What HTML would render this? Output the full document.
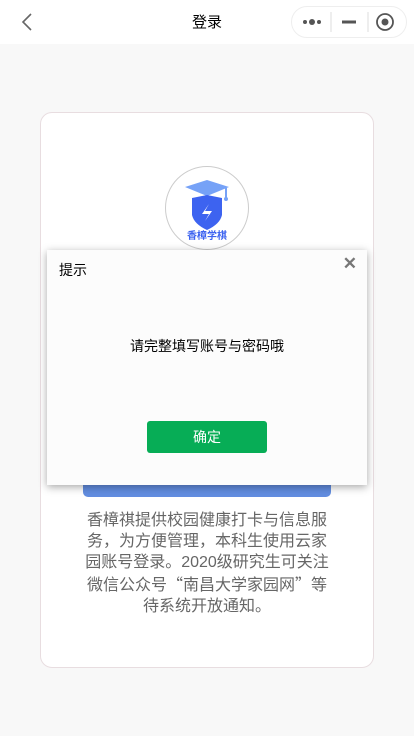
<!DOCTYPE html>
<html><head><meta charset="utf-8"><style>
*{margin:0;padding:0;box-sizing:border-box}
body{width:414px;height:736px;background:#f8f8f8;font-family:"Liberation Sans","Noto Sans CJK SC",sans-serif;position:relative;overflow:hidden}
.nav{position:absolute;left:0;top:0;width:414px;height:44px;background:#fff}
.title{position:absolute;left:0;width:414px;top:11px;text-align:center;font-size:15px;color:#000}
.cap{position:absolute;left:291px;top:6px;width:116px;height:32px;border:1px solid #eee;border-radius:16px;background:#fff}
.card{position:absolute;left:40px;top:112px;width:334px;height:556px;background:#fff;border:1px solid #e8dde0;border-radius:12px}
.logo{position:absolute;left:165px;top:166px;width:84px;height:84px;border:1px solid #ccc;border-radius:50%;background:#fff}
.btnblue{position:absolute;left:83px;top:470px;width:248px;height:27px;background:#628de0;border-radius:0 0 5px 5px}
.txt{position:absolute;left:84px;top:510px;width:246px;font-size:16px;line-height:21px;color:#666;text-align:center}
.q{font-family:"Noto Sans CJK SC",sans-serif}
.dlg{position:absolute;left:47px;top:250px;width:320px;height:235px;background:#fcfcfc;box-shadow:0 2px 8px rgba(0,0,0,.35)}
.dt{position:absolute;left:12px;top:10px;font-size:14px;color:#000}
.dx{position:absolute;right:10px;top:4px;font-size:17px;color:#777;font-weight:bold}
.dm{position:absolute;left:0;width:320px;top:86px;text-align:center;font-size:14px;color:#000}
.ok{position:absolute;left:100px;top:171px;width:120px;height:32px;background:#07ad56;border-radius:3px;color:#fff;font-size:14px;text-align:center;line-height:32px}
</style></head><body>
<div class="nav">
<svg style="position:absolute;left:20px;top:12px" width="14" height="20"><path d="M11 2 L3 10 L11 18" stroke="#666" stroke-width="1.6" fill="none"/></svg>
<div class="title">登录</div>
<div class="cap">
<svg width="116" height="32" style="position:absolute;left:-1px;top:-1px">
<circle cx="14" cy="16" r="2" fill="#555"/><circle cx="21" cy="16" r="3" fill="#555"/><circle cx="28" cy="16" r="2" fill="#555"/>
<line x1="40" y1="6" x2="40" y2="26" stroke="#ddd"/>
<rect x="51" y="14.5" width="14" height="3" fill="#555"/>
<line x1="77" y1="6" x2="77" y2="26" stroke="#ddd"/>
<circle cx="94" cy="16" r="8" stroke="#555" stroke-width="1.8" fill="none"/><circle cx="94" cy="16" r="3.5" fill="#555"/>
</svg></div>
</div>
<div class="card"></div>
<div class="logo">
<svg width="84" height="84" style="position:absolute;left:-1px;top:-1px">
<path d="M20 21 L42 14 L64 21 L42 30 Z" fill="#76a2f7"/>
<line x1="61" y1="22" x2="61" y2="32" stroke="#76a2f7" stroke-width="2"/><circle cx="61" cy="33" r="2" fill="#76a2f7"/>
<path d="M27 32 L42 29 L57 32 L57 49 Q55 58 42 64 Q29 58 27 49 Z" fill="#3d63f0"/>
<path d="M44 38 L37 48 L44 48 L40 55 L47 45 L40 45 Z" fill="#fff"/>
<text x="42" y="73" text-anchor="middle" font-size="10" font-weight="bold" fill="#3d63f0" font-family="Noto Sans CJK SC,sans-serif">香樟学棋</text>
</svg></div>
<div class="btnblue"></div>
<div class="txt">香樟祺提供校园健康打卡与信息服务，为方便管理，本科生使用云家园账号登录。2020级研究生可关注微信公众号<span class="q">“</span>南昌大学家园网<span class="q">”</span>等<br>待系统开放通知。</div>
<div class="dlg">
<div class="dt">提示</div>
<div class="dx">✕</div>
<div class="dm">请完整填写账号与密码哦</div>
<div class="ok">确定</div>
</div>
</body></html>
